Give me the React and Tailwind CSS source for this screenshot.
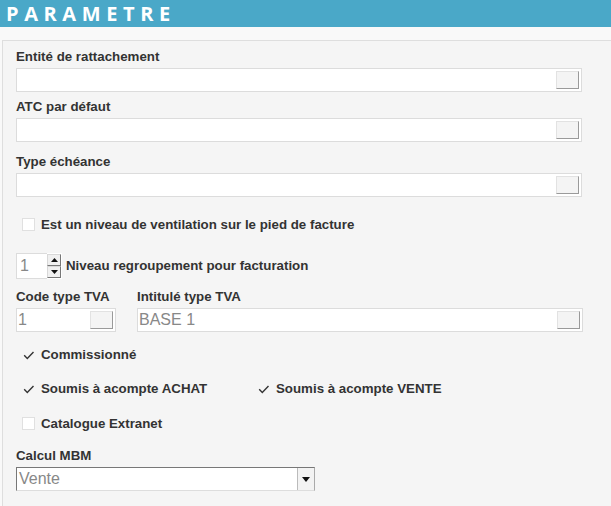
import React from "react";

const font = { fontFamily: '"Liberation Sans", Arial, sans-serif' };

function Label({ children, className = "" }) {
  return (
    <div className={`text-[13.3px] font-bold leading-[15px] text-[#333] ${className}`}>{children}</div>
  );
}

function PickButton({ className = "" }) {
  return (
    <div
      className={`h-[18px] w-[23px] border border-[#e2e2e2] border-r-[#9a9a9a] border-b-[#9a9a9a] bg-[#f4f4f4] ${className}`}
    />
  );
}

function LookupField({ value = "", className = "" }) {
  return (
    <div
      className={`flex h-[24px] items-center border border-[#dcdcdc] bg-white pl-[1px] pr-[2px] ${className}`}
    >
      <span className="flex-1 text-[16px] leading-none text-[#888]">{value}</span>
      <PickButton />
    </div>
  );
}

function Check({ checked, label, className = "" }) {
  return (
    <div className={`flex h-[15px] items-center gap-[6px] ${className}`}>
      {checked ? (
        <svg width="12" height="12" viewBox="0 0 12 12">
          <path d="M1.2 6.3 L4.3 9.4 L10.5 3" fill="none" stroke="#333" strokeWidth="1.4" />
        </svg>
      ) : (
        <div className="h-[13px] w-[13px] border border-[#e0e0e0] bg-white" />
      )}
      <span className="text-[13.3px] font-bold leading-[15px] text-[#333]">{label}</span>
    </div>
  );
}

export default function App() {
  return (
    <div className="h-[506px] w-[611px] overflow-hidden bg-[#f9f9f9]" style={font}>
      <div className="flex h-[27px] items-center bg-[#4aa8c8] pl-[6px]">
        <span
          className="text-[20px] font-bold tracking-[5.6px] text-white"
          style={{ fontFamily: '"Open Sans", "Liberation Sans", sans-serif' }}
        >
          PARAMETRE
        </span>
      </div>
      <div className="mt-[13px] ml-[2px] h-[470px] border-l border-t border-[#dedede] bg-[#f5f5f5] pl-[13px] pt-[8px]">
        <Label>Entité de rattachement</Label>
        <LookupField className="mt-[4px] w-[566px]" />

        <Label className="mt-[7px]">ATC par défaut</Label>
        <LookupField className="mt-[4px] w-[566px]" />

        <Label className="mt-[12px]">Type échéance</Label>
        <LookupField className="mt-[4px] w-[566px]" />

        <Check className="mt-[20px] ml-[6px]" label="Est un niveau de ventilation sur le pied de facture" />

        <div className="mt-[21px] flex items-center">
          <div className="flex h-[26px] w-[31px] items-center border border-[#dcdcdc] border-r-0 bg-white pl-[3px] text-[16px] text-[#888]">
            1
          </div>
          <div className="flex h-[26px] flex-col justify-center bg-white pr-[1px]">
            <div className="flex h-[12px] w-[14px] items-center justify-center border border-[#d8d8d8] border-r-[#777] border-b-[#777] bg-[#f0f0f0]">
              <svg width="7" height="4" viewBox="0 0 7 4">
                <path d="M0 4 L3.5 0 L7 4 Z" fill="#111" />
              </svg>
            </div>
            <div className="flex h-[12px] w-[14px] items-center justify-center border border-[#d8d8d8] border-r-[#777] border-b-[#777] bg-[#f0f0f0]">
              <svg width="7" height="4" viewBox="0 0 7 4">
                <path d="M0 0 L7 0 L3.5 4 Z" fill="#111" />
              </svg>
            </div>
          </div>
          <span className="ml-[4px] text-[13.3px] font-bold text-[#333]">Niveau regroupement pour facturation</span>
        </div>

        <div className="mt-[10px] flex gap-[21px]">
          <div>
            <Label>Code type TVA</Label>
            <LookupField value="1" className="mt-[4px] w-[100px]" />
          </div>
          <div>
            <Label>Intitulé type TVA</Label>
            <LookupField value="BASE 1" className="mt-[4px] w-[446px]" />
          </div>
        </div>

        <Check checked className="mt-[15px] ml-[7px]" label="Commissionné" />

        <div className="mt-[19px] flex">
          <Check checked className="ml-[7px] w-[235px]" label="Soumis à acompte ACHAT" />
          <Check checked label="Soumis à acompte VENTE" />
        </div>

        <Check className="mt-[20px] ml-[6px]" label="Catalogue Extranet" />

        <Label className="mt-[17px]">Calcul MBM</Label>
        <div className="mt-[4px] flex h-[24px] w-[299px] items-center border border-[#777] border-r-[#aaa] border-b-[#ddd] bg-white">
          <span className="flex-1 pl-[2px] text-[16px] leading-none text-[#888]">Vente</span>
          <div className="flex h-[22px] w-[17px] items-center justify-center border-l border-[#bbb] border-r-[#777] border-b-[#777] bg-[#f3f3f3]">
            <svg width="8" height="5" viewBox="0 0 8 5">
              <path d="M0 0 L8 0 L4 5 Z" fill="#111" />
            </svg>
          </div>
        </div>
      </div>
    </div>
  );
}
